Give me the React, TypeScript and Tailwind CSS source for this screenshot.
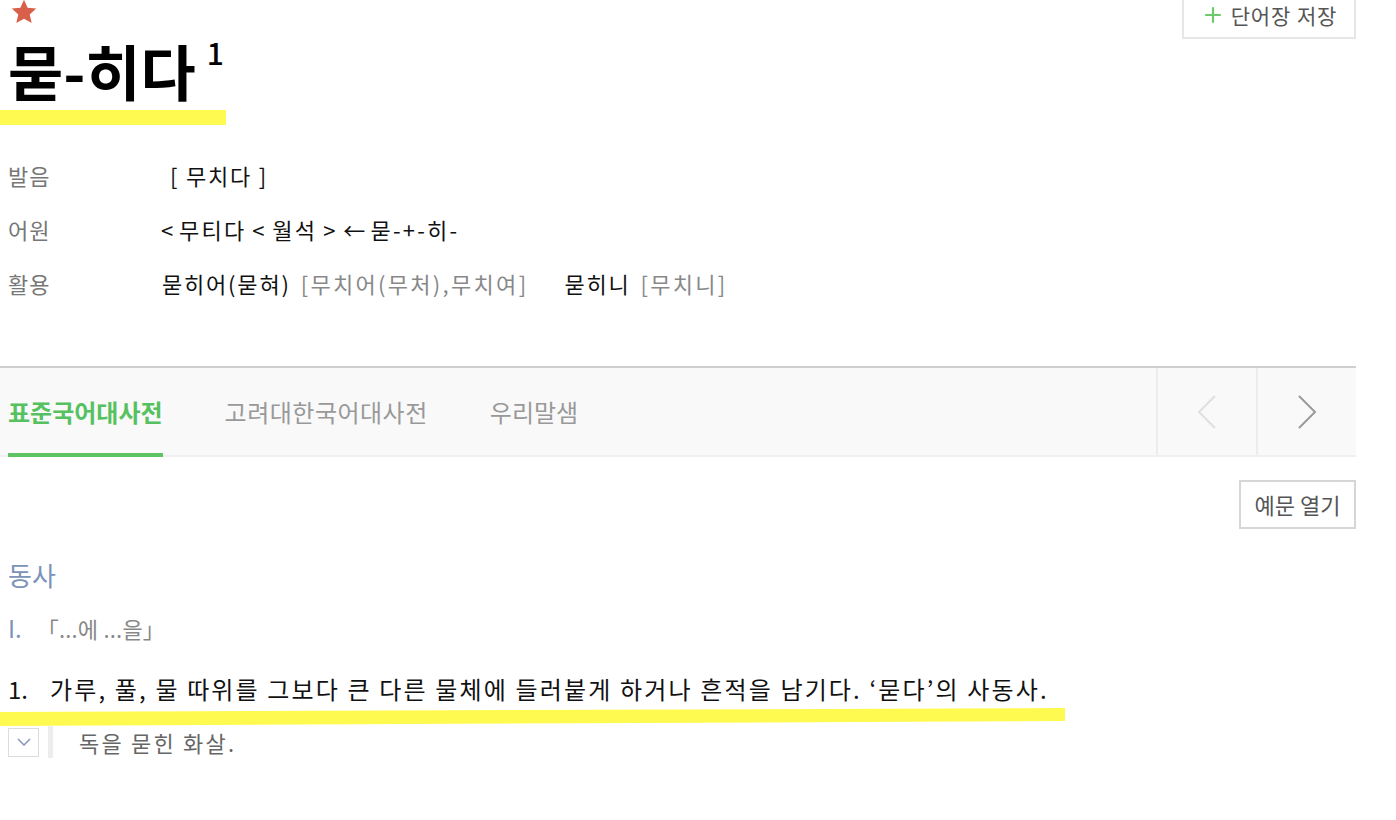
import React from 'react';
import { Plus } from 'lucide-react';

const FONT = '[font-family:"Noto_Sans_CJK_KR","Noto_Sans",sans-serif]';

const InfoRow: React.FC<{ label: string; children: React.ReactNode }> = ({ label, children }) => (
  <div className="flex items-center h-[54px]">
    <div className="w-[154px] text-[22px] tracking-[1px] text-[#777]">{label}</div>
    <div className="text-[22px] tracking-[1.8px] text-[#111] flex items-center">{children}</div>
  </div>
);

const Lt = () => <span className="mx-[6px]">&lt;</span>;
const Gt = () => <span className="mx-[6px]">&gt;</span>;

const App: React.FC = () => {
  return (
    <div className={`${FONT} w-[1396px] h-[820px] bg-white overflow-hidden`}>
      <div className="w-[1356px] relative">
        {/* 단어장 저장 */}
        <button className="absolute right-0 top-0 h-[41px] w-[174px] border-2 border-t-0 border-[#e6e6e6] bg-white flex items-center justify-center gap-[6px] pb-[5px]">
          <Plus size={24} strokeWidth={2.2} className="text-[#6cc96c]" />
          <span className="text-[21px] leading-none tracking-[0.9px] text-[#555]">단어장 저장</span>
        </button>

        {/* 별 + 표제어 */}
        <div className="pl-[10px] h-[26px]">
          <svg className="-mt-[2px]" width="28" height="28" viewBox="0 0 24 24">
            <path d="M12 1.5l3.1 6.9 7.4.7-5.6 5 1.7 7.4L12 17.7l-6.6 3.8 1.7-7.4-5.6-5 7.4-.7z" fill="#d8604a" />
          </svg>
        </div>
        <div className="pl-2 mt-[6px] flex items-start h-[80px]">
          <h1 className="text-[60px] font-bold text-black leading-[80px]">묻-히다</h1>
          <span className="text-[30px] font-medium text-black ml-[11px] mt-[7px] leading-none">1</span>
        </div>
        <div className="h-[15px] w-[226px] bg-[#fffa4f]" />

        {/* 발음 / 어원 / 활용 */}
        <div className="pl-2 mt-[23px]">
          <InfoRow label="발음">
            <span className="ml-[8px]">[ 무치다 ]</span>
          </InfoRow>
          <InfoRow label="어원">
            <span className="-ml-[1px]">&lt;</span>
            <span className="ml-[4px] tracking-[2.2px]">무티다</span>
            <Lt />
            <span className="tracking-[2.2px]">월석</span>
            <Gt />
            <span className="tracking-[2.2px]">←</span>
            <span className="ml-[3px] tracking-[2.2px]">묻-+-히-</span>
          </InfoRow>
          <InfoRow label="활용">
            <span>묻히어(묻혀)</span>
            <span className="ml-[10px] tracking-[2.3px] text-[#888]">[무치어(무처),무치여]</span>
            <span className="ml-[36px]">묻히니</span>
            <span className="ml-[10px] tracking-[2.3px] text-[#888]">[무치니]</span>
          </InfoRow>
        </div>

        {/* 탭 */}
        <div className="mt-[56px] border-t-2 border-[#cfcfcf] bg-[#f9f9f9] border-b-2 border-b-[#efefef] h-[91px] flex">
          <div className="flex-1 flex pl-2 gap-[62px]">
            <div className="relative flex items-center text-[24px] font-bold text-[#55c160]">
              표준국어대사전
              <div className="absolute left-0 right-0 bottom-[-2px] h-[4px] bg-[#5cc465]" />
            </div>
            <div className="flex items-center text-[24px] tracking-[0.5px] text-[#999]">고려대한국어대사전</div>
            <div className="flex items-center text-[24px] text-[#999]">우리말샘</div>
          </div>
          <div className="w-[100px] border-l-2 border-[#ececec] flex items-center justify-center">
            <svg width="22" height="36" viewBox="0 0 22 36">
              <path d="M19 2L3 18l16 16" fill="none" stroke="#e0e0e0" strokeWidth="2" />
            </svg>
          </div>
          <div className="w-[100px] border-l-2 border-[#ececec] flex items-center justify-center">
            <svg width="22" height="36" viewBox="0 0 22 36">
              <path d="M3 2l16 16L3 34" fill="none" stroke="#9a9a9a" strokeWidth="2" />
            </svg>
          </div>
        </div>

        {/* 예문 열기 */}
        <div className="flex justify-end mt-[23px]">
          <button className="w-[117px] h-[49px] border-2 border-[#d6d6d6] bg-white text-[22px] text-[#555]">예문 열기</button>
        </div>

        {/* 뜻풀이 */}
        <div className="pl-2 mt-[30px]">
          <div className="text-[26px] text-[#7b93b9] leading-[32px]">동사</div>
          <div className="mt-[21px] flex items-center leading-[32px]">
            <span className="text-[24px] text-[#7b93b9]">I.</span>
            <span className="ml-[15px] text-[22px] tracking-[0.2px] text-[#888]">「...에 ...을」</span>
          </div>
          <div className="mt-[29px] flex items-center text-[24px] text-[#111] leading-[32px]">
            <span className="w-[42px]">1.</span>
            <span className="tracking-[2.15px]">가루, 풀, 물 따위를 그보다 큰 다른 물체에 들러붙게 하거나 흔적을 남기다. ‘묻다’의 사동사.</span>
          </div>
        </div>
        <svg className="block mt-[2px]" width="1066" height="19" viewBox="0 0 1066 19">
          <path d="M0 5 L1065 1 L1065 14 L0 19 Z" fill="#fffa4f" />
        </svg>
        <div className="pl-2 flex items-center h-[32px]">
          <div className="w-[31px] h-[29px] border border-[#dcdcdc] bg-white flex items-center justify-center">
            <svg width="14" height="8" viewBox="0 0 14 8">
              <path d="M1 1l6 6 6-6" fill="none" stroke="#8a9ab8" strokeWidth="1.6" />
            </svg>
          </div>
          <div className="ml-[9px] w-[5px] h-[32px] bg-[#ededed]" />
          <span className="ml-[26px] text-[22px] tracking-[2.2px] text-[#666]">독을 묻힌 화살.</span>
        </div>
      </div>
    </div>
  );
};

export default App;
